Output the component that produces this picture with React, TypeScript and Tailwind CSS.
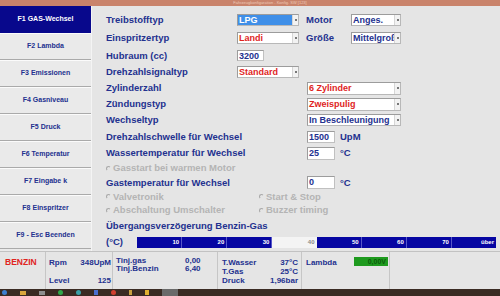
const NAV = [
  "F1 GAS-Wechsel",
  "F2 Lambda",
  "F3 Emissionen",
  "F4 Gasniveau",
  "F5 Druck",
  "F6 Temperatur",
  "F7 Eingabe k",
  "F8 Einspritzer",
  "F9 - Esc Beenden",
];

const BAR = ["10", "20", "30", "40", "50", "60", "70", "über"];

const label = "text-[9.5px] font-bold leading-none text-[#23318f] whitespace-nowrap";
const dim = "text-[9.5px] font-bold leading-none text-[#b4b4b4] whitespace-nowrap";

type Tone = "red" | "navy" | "sel";

function Select({ value, w, tone, h = "h-[12px]" }: { value: string; w: string; tone: Tone; h?: string }) {
  const text =
    tone === "red" ? "bg-white text-[#e0241e]" : tone === "navy" ? "bg-white text-[#23318f]" : "bg-[#3f8fe8] text-white";
  return (
    <div className={`flex ${w} ${h} shrink-0 border border-[#b8b8b8] border-t-[#9c9c9c] border-l-[#9c9c9c] bg-white`}>
      <span className={`flex-1 overflow-hidden whitespace-nowrap pl-[1px] text-[9px] font-bold leading-[10px] ${text}`}>
        {value}
      </span>
      <span className="flex w-[6px] shrink-0 items-center justify-center border-l border-[#d6d6d6] bg-[#f2f2f2]">
        <span className="h-[2px] w-[2px] bg-[#777]" />
      </span>
    </div>
  );
}

function Input({ value, w = "w-[28px]", h = "h-[12px]" }: { value: string; w?: string; h?: string }) {
  return (
    <div
      className={`${w} ${h} shrink-0 border border-[#c0c0c0] border-t-[#9c9c9c] border-l-[#9c9c9c] bg-white pl-[1px] text-[9px] font-bold leading-[10px] text-[#23318f]`}
    >
      {value}
    </div>
  );
}

function Radio({ text, w }: { text: string; w?: string }) {
  return (
    <div className={`flex items-center ${w ?? ""}`}>
      <span className="mr-[1px] h-[5px] w-[5px] rounded-full border border-t-[#a8a8a8] border-l-[#a8a8a8] border-r-transparent border-b-transparent" />
      <span className={`${dim} ml-[1px]`}>{text}</span>
    </div>
  );
}

export default function App() {
  return (
    <div className="flex h-[296px] w-[500px] flex-col overflow-hidden bg-[#e5e5e5] font-['Liberation_Sans',Arial,sans-serif]">
      {/* title bar */}
      <div className="flex h-[6px] items-center justify-center bg-[#c9836b] pl-[40px]">
        <span className="text-[4px] leading-none text-[#edc9b8]">Fahrzeugkonfiguration - Konfig. SW [123]</span>
      </div>

      <div className="flex h-[245px]">
        {/* sidebar */}
        <nav className="flex w-[92px] shrink-0 flex-col border-r border-[#f4f4f4] bg-[#eaeaea]">
          {NAV.map((item, i) => (
            <div
              key={item}
              className={
                i === 0
                  ? "flex h-[27px] items-center justify-center bg-[#08088c] text-[7px] font-bold text-white"
                  : "flex h-[27px] items-center justify-center border-b border-[#aaaaaa] text-[7px] font-bold text-[#23318f] shadow-[inset_0_1px_0_#fbfbfb]"
              }
            >
              {item}
            </div>
          ))}
        </nav>

        {/* form */}
        <main className="flex flex-1 flex-col pl-[14px] pt-[5px]">
          <div className="flex h-[18px] items-center">
            <span className={`${label} w-[131px]`}>Treibstofftyp</span>
            <Select value="LPG" w="w-[62px]" tone="sel" />
            <span className={`${label} ml-[7px] w-[45px]`}>Motor</span>
            <Select value="Anges." w="w-[50px]" tone="navy" />
          </div>
          <div className="flex h-[18px] items-center">
            <span className={`${label} w-[131px]`}>Einspritzertyp</span>
            <Select value="Landi" w="w-[62px]" tone="red" />
            <span className={`${label} ml-[7px] w-[45px]`}>Größe</span>
            <Select value="Mittelgroß" w="w-[50px]" tone="navy" />
          </div>
          <div className="flex h-[17px] items-center">
            <span className={`${label} w-[131px]`}>Hubraum (cc)</span>
            <Input value="3200" w="w-[27px]" h="h-[11px]" />
          </div>
          <div className="flex h-[16px] items-center">
            <span className={`${label} w-[131px]`}>Drehzahlsignaltyp</span>
            <Select value="Standard" w="w-[62px]" tone="red" />
          </div>
          <div className="flex h-[16px] items-center">
            <span className={`${label} w-[201px]`}>Zylinderzahl</span>
            <Select value="6 Zylinder" w="w-[94px]" tone="red" h="h-[13px]" />
          </div>
          <div className="flex h-[16px] items-center">
            <span className={`${label} w-[201px]`}>Zündungstyp</span>
            <Select value="Zweispulig" w="w-[94px]" tone="red" h="h-[13px]" />
          </div>
          <div className="flex h-[16px] items-center">
            <span className={`${label} w-[201px]`}>Wechseltyp</span>
            <Select value="In Beschleunigung" w="w-[94px]" tone="navy" />
          </div>
          <div className="flex h-[17px] items-center">
            <span className={`${label} w-[201px]`}>Drehzahlschwelle für Wechsel</span>
            <Input value="1500" />
            <span className={`${label} ml-[5px]`}>UpM</span>
          </div>
          <div className="flex h-[16px] items-center">
            <span className={`${label} w-[201px]`}>Wassertemperatur für Wechsel</span>
            <Input value="25" h="h-[13px]" />
            <span className={`${label} ml-[5px]`}>°C</span>
          </div>
          <div className="flex h-[14px] items-center">
            <Radio text="Gasstart bei warmen Motor" />
          </div>
          <div className="flex h-[15px] items-center">
            <span className={`${label} w-[201px]`}>Gastemperatur für Wechsel</span>
            <Input value="0" h="h-[13px]" />
            <span className={`${label} ml-[5px]`}>°C</span>
          </div>
          <div className="flex h-[13px] items-center">
            <Radio text="Valvetronik" w="w-[153px]" />
            <Radio text="Start & Stop" />
          </div>
          <div className="flex h-[14px] items-center">
            <Radio text="Abschaltung Umschalter" w="w-[153px]" />
            <Radio text="Buzzer timing" />
          </div>
          <div className="flex h-[17px] items-center">
            <span className={label}>Übergangsverzögerung Benzin-Gas</span>
          </div>
          <div className="flex h-[16px] items-center pr-[4px]">
            <span className={`${label} w-[31px]`}>(°C)</span>
            <div className="flex h-[11px] flex-1">
              {BAR.map((v) => (
                <div
                  key={v}
                  className={
                    v === "40"
                      ? "flex flex-1 items-center justify-end bg-[#f4f4f4] pr-[2px] text-[6px] font-bold text-[#8a8a8a]"
                      : "flex flex-1 items-center justify-end border-r border-[#5656c8] bg-[#0606a2] pr-[2px] text-[6px] font-bold text-white last:border-r-0"
                  }
                >
                  {v}
                </div>
              ))}
            </div>
          </div>
        </main>
      </div>

      {/* status */}
      <div className="flex h-[38px] border-t border-[#c2c2c2] text-[8px] font-bold leading-[9px] text-[#23318f]">
        <div className="w-[46px] border-r border-[#c6c6c6] pl-[5px] pt-[6px] text-[8.5px] text-[#e0241e]">BENZIN</div>
        <div className="flex w-[67px] flex-col border-r border-[#c6c6c6] pl-[3px] pr-[1px] pt-[6px]">
          <div className="flex justify-between">
            <span>Rpm</span>
            <span>348UpM</span>
          </div>
          <div className="h-[9px]" />
          <div className="flex justify-between">
            <span>Level</span>
            <span>125</span>
          </div>
        </div>
        <div className="flex w-[105px] flex-col border-r border-[#c6c6c6] pl-[3px] pt-[5px] leading-[8px]">
          <div className="flex">
            <span className="w-[69px]">Tinj.gas</span>
            <span>0,00</span>
          </div>
          <div className="flex">
            <span className="w-[69px]">Tinj.Benzin</span>
            <span>6,40</span>
          </div>
        </div>
        <div className="flex w-[84px] flex-col border-r border-[#c6c6c6] pl-[4px] pr-[3px] pt-[6px]">
          <div className="flex justify-between">
            <span>T.Wasser</span>
            <span>37°C</span>
          </div>
          <div className="flex justify-between">
            <span>T.Gas</span>
            <span>25°C</span>
          </div>
          <div className="flex justify-between">
            <span>Druck</span>
            <span>1,96bar</span>
          </div>
        </div>
        <div className="flex w-[88px] items-start border-r border-[#c6c6c6] pl-[4px] pt-[6px]">
          <span className="w-[48px]">Lambda</span>
          <span className="mt-[-1px] flex h-[9px] w-[34px] items-center justify-end bg-[#1e9a1e] pr-[2px] text-[7px] text-[#0c5a0c]">
            0,00V
          </span>
        </div>
      </div>

      {/* taskbar */}
      <div className="flex h-[7px] items-center gap-[13px] bg-[#3a2b23] pl-[2px]">
        <span className="h-[5px] w-[5px] rounded-full bg-[#3d7fd0]" />
        <span className="h-[4px] w-[6px] bg-[#d9a63c]" />
        <span className="h-[4px] w-[6px] bg-[#8f8f8f]" />
        <span className="h-[5px] w-[5px] rounded-full bg-[#2fa84a]" />
        <span className="h-[5px] w-[5px] rounded-full bg-[#3aa0a8]" />
        <span className="h-[5px] w-[4px] bg-[#4a6fd0]" />
        <span className="h-[5px] w-[5px] rounded-full bg-[#d04030]" />
        <span className="h-[5px] w-[3px] bg-[#c8a040]" />
        <span className="h-[5px] w-[4px] bg-[#e0b030]" />
        <span className="h-[7px] w-[16px] bg-[#6a6a6a]" />
      </div>
    </div>
  );
}
